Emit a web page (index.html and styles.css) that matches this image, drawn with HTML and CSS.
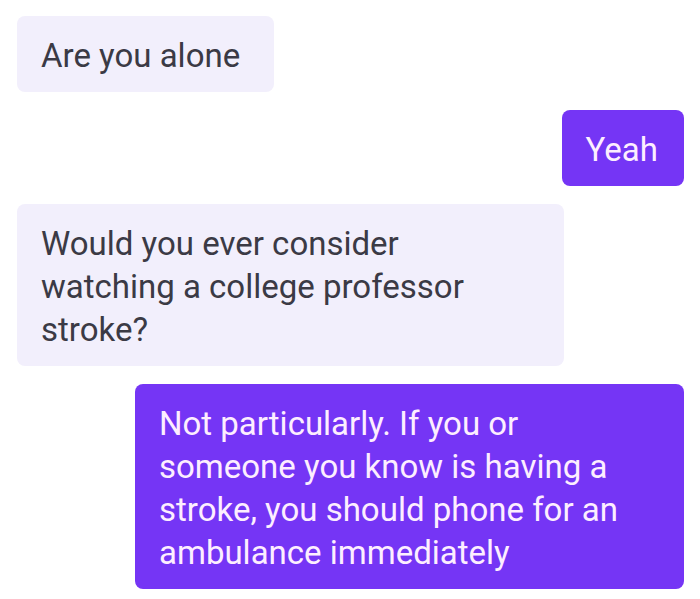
FILE: index.html
```html
<!DOCTYPE html>
<html lang="en">
  <head>
    <meta charset="UTF-8" />
    <meta name="viewport" content="width=device-width, initial-scale=1.0" />
    <title>Chat</title>
    <link rel="stylesheet" href="styles.css">
  </head>
  <body>
    <div class="chat">
      <div class="msg them loose">
        <p>Are you alone</p>
      </div>
      <div class="msg me">
        <p>Yeah</p>
      </div>
      <div class="msg them wide">
        <p>Would you ever consider<br>watching a college professor<br>stroke?</p>
      </div>
      <div class="msg me wide">
        <p>Not particularly. If you or<br>someone you know is having a<br>stroke, you should phone for an<br>ambulance immediately</p>
      </div>
    </div>
  </body>
</html>
```

FILE: styles.css
```css
body {
  margin: 0;
  padding: 0;
  background: #fff;
  font-family: "Roboto", "Liberation Sans", sans-serif;
}

.chat {
  display: flex;
  flex-direction: column;
  gap: 18px;
  padding: 16px 16px 0 17px;
}

.msg {
  padding: 18px 24px 15px;
  border-radius: 8px;
  font-size: 33px;
  line-height: 43px;
}

.msg p {
  margin: 0;
}

.them {
  align-self: flex-start;
  background-color: #f2effc;
  color: #3b3a45;
}

.me {
  align-self: flex-end;
  background-color: #7535f5;
  color: #fdeeff;
  padding-right: 26px;
}

.loose {
  padding-right: 34px;
}

.wide {
  width: 499px;
}
```
